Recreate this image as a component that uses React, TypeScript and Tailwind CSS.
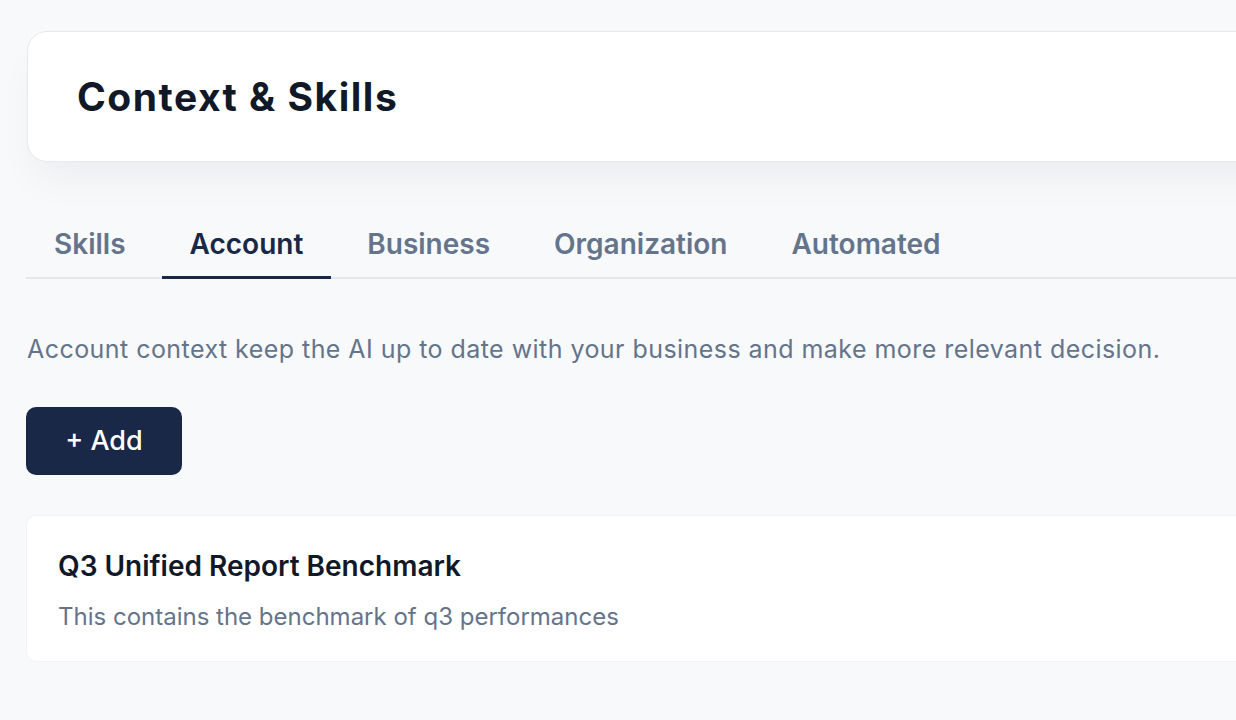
import React, { useState } from 'react';

type ContextItem = {
  id: string;
  title: string;
  description: string;
};

const tabs = ['Skills', 'Account', 'Business', 'Organization', 'Automated'];

const items: ContextItem[] = [
  {
    id: 'q3-benchmark',
    title: 'Q3 Unified Report Benchmark',
    description: 'This contains the benchmark of q3 performances',
  },
];

export default function App() {
  const [activeTab, setActiveTab] = useState('Account');

  return (
    <div className="h-screen w-full overflow-hidden bg-[#f8f9fb] font-['Inter','Noto_Sans',sans-serif]">
      <div className="w-[1320px] pl-[26px] pt-[31px]">
        <header className="ml-px h-[131px] rounded-[20px] border border-[#e7e8ec] bg-white pl-[49px] flex items-center shadow-[0_24px_40px_-8px_rgba(15,23,42,0.05)]">
          <h1 className="text-[39px] font-bold tracking-[1.5px] text-[#111827] leading-none">
            Context &amp; Skills
          </h1>
        </header>

        <nav className="mt-[58px] flex gap-2 border-b-2 border-[#e2e8f0]">
          {tabs.map((tab) => {
            const active = tab === activeTab;
            return (
              <button
                key={tab}
                onClick={() => setActiveTab(tab)}
                className={
                  active
                    ? 'px-[28px] pt-[8px] pb-[16px] -mb-[2px] border-b-[3px] border-[#1a2847] text-[28px] leading-[32px] font-semibold text-[#1a2847]'
                    : 'px-[28px] pt-[8px] pb-[16px] -mb-[2px] border-b-[3px] border-transparent text-[28px] leading-[32px] font-semibold text-[#64748b]'
                }
              >
                {tab}
              </button>
            );
          })}
        </nav>

        <p className="ml-px mt-[54px] text-[25px] leading-[32px] tracking-[0.45px] text-[#64748b]">
          Account context keep the AI up to date with your business and make more relevant decision.
        </p>

        <button className="mt-[42px] h-[68px] w-[156px] rounded-[10px] bg-[#1a2847] text-[27px] font-medium text-white flex items-center justify-center">
          + Add
        </button>

        <section className="mt-[40px] space-y-4">
          {items.map((item) => (
            <div
              key={item.id}
              className="h-[147px] rounded-[10px] border border-[#f1f2f5] bg-white pl-[31px] pt-[34px]"
            >
              <h3 className="text-[28px] leading-[32px] font-semibold text-[#111827]">{item.title}</h3>
              <p className="mt-[21px] text-[24px] leading-[28px] text-[#64748b]">{item.description}</p>
            </div>
          ))}
        </section>
      </div>
    </div>
  );
}
